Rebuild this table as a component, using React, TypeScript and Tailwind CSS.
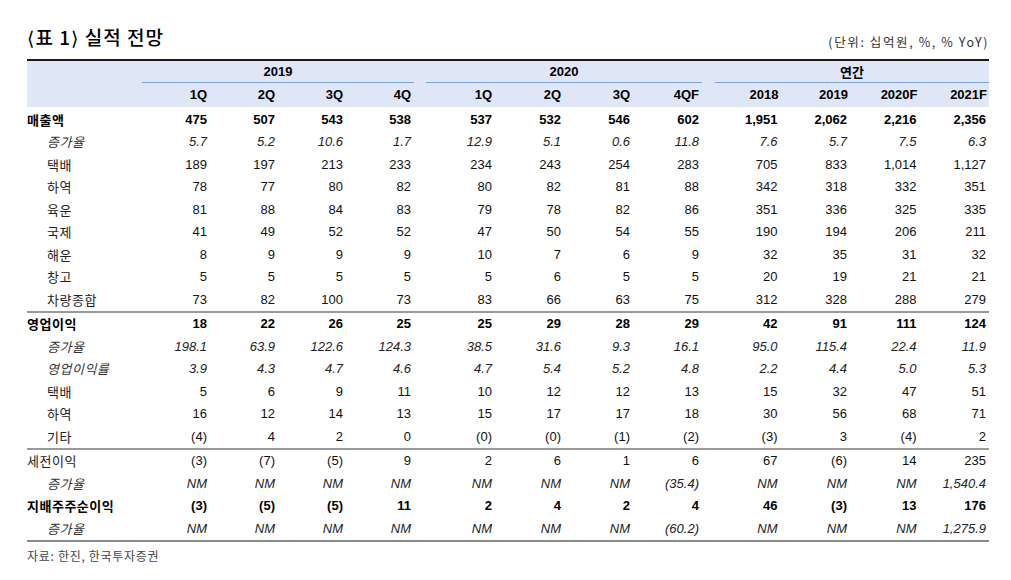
const GRID =
  'grid grid-cols-[115px_repeat(4,68px)_12px_repeat(4,69px)_9px_repeat(4,69.5px)]';

type RowKind = 'bold' | 'italic' | 'sub' | 'plain';
type Row = { label: string; kind: RowKind; vals: string[] };

const sales: Row[] = [
  { label: '매출액', kind: 'bold', vals: ['475', '507', '543', '538', '537', '532', '546', '602', '1,951', '2,062', '2,216', '2,356'] },
  { label: '증가율', kind: 'italic', vals: ['5.7', '5.2', '10.6', '1.7', '12.9', '5.1', '0.6', '11.8', '7.6', '5.7', '7.5', '6.3'] },
  { label: '택배', kind: 'sub', vals: ['189', '197', '213', '233', '234', '243', '254', '283', '705', '833', '1,014', '1,127'] },
  { label: '하역', kind: 'sub', vals: ['78', '77', '80', '82', '80', '82', '81', '88', '342', '318', '332', '351'] },
  { label: '육운', kind: 'sub', vals: ['81', '88', '84', '83', '79', '78', '82', '86', '351', '336', '325', '335'] },
  { label: '국제', kind: 'sub', vals: ['41', '49', '52', '52', '47', '50', '54', '55', '190', '194', '206', '211'] },
  { label: '해운', kind: 'sub', vals: ['8', '9', '9', '9', '10', '7', '6', '9', '32', '35', '31', '32'] },
  { label: '창고', kind: 'sub', vals: ['5', '5', '5', '5', '5', '6', '5', '5', '20', '19', '21', '21'] },
  { label: '차량종합', kind: 'sub', vals: ['73', '82', '100', '73', '83', '66', '63', '75', '312', '328', '288', '279'] },
];

const opProfit: Row[] = [
  { label: '영업이익', kind: 'bold', vals: ['18', '22', '26', '25', '25', '29', '28', '29', '42', '91', '111', '124'] },
  { label: '증가율', kind: 'italic', vals: ['198.1', '63.9', '122.6', '124.3', '38.5', '31.6', '9.3', '16.1', '95.0', '115.4', '22.4', '11.9'] },
  { label: '영업이익률', kind: 'italic', vals: ['3.9', '4.3', '4.7', '4.6', '4.7', '5.4', '5.2', '4.8', '2.2', '4.4', '5.0', '5.3'] },
  { label: '택배', kind: 'sub', vals: ['5', '6', '9', '11', '10', '12', '12', '13', '15', '32', '47', '51'] },
  { label: '하역', kind: 'sub', vals: ['16', '12', '14', '13', '15', '17', '17', '18', '30', '56', '68', '71'] },
  { label: '기타', kind: 'sub', vals: ['(4)', '4', '2', '0', '(0)', '(0)', '(1)', '(2)', '(3)', '3', '(4)', '2'] },
];

const netProfit: Row[] = [
  { label: '세전이익', kind: 'plain', vals: ['(3)', '(7)', '(5)', '9', '2', '6', '1', '6', '67', '(6)', '14', '235'] },
  { label: '증가율', kind: 'italic', vals: ['NM', 'NM', 'NM', 'NM', 'NM', 'NM', 'NM', '(35.4)', 'NM', 'NM', 'NM', '1,540.4'] },
  { label: '지배주주순이익', kind: 'bold', vals: ['(3)', '(5)', '(5)', '11', '2', '4', '2', '4', '46', '(3)', '13', '176'] },
  { label: '증가율', kind: 'italic', vals: ['NM', 'NM', 'NM', 'NM', 'NM', 'NM', 'NM', '(60.2)', 'NM', 'NM', 'NM', '1,275.9'] },
];

const kor = "font-['Noto_Sans_CJK_KR',sans-serif]";
const num = "font-['Liberation_Sans',Arial,sans-serif]";

function DataRow({ row }: { row: Row }) {
  const labelCls =
    row.kind === 'bold'
      ? 'font-bold text-black'
      : row.kind === 'italic'
        ? 'italic pl-5 text-[#333]'
        : row.kind === 'sub'
          ? 'pl-5 text-[#222]'
          : 'text-[#222]';
  const numCls =
    row.kind === 'bold' ? 'font-bold text-black' : row.kind === 'italic' ? 'italic text-[#222]' : 'text-[#111]';

  const cells: React.ReactNode[] = [];
  row.vals.forEach((v, i) => {
    if (i === 4 || i === 8) cells.push(<div key={`g${i}`} />);
    cells.push(
      <div key={i} className={`${num} ${numCls} pr-[3px] text-right text-[13px]`}>
        {v}
      </div>
    );
  });

  return (
    <div className={`${GRID} h-[22.5px] items-center leading-none`}>
      <div className={`${kor} ${labelCls} text-[13px] tracking-[0.5px] whitespace-nowrap`}>{row.label}</div>
      {cells}
    </div>
  );
}

export default function App() {
  const q1 = ['1Q', '2Q', '3Q', '4Q'];
  const q2 = ['1Q', '2Q', '3Q', '4QF'];
  const yrs = ['2018', '2019', '2020F', '2021F'];
  const bracket = "font-['DejaVu_Sans',sans-serif] font-normal";

  return (
    <div className="w-[1011px] h-[580px] bg-white pl-[27px] pt-[26px]">
      <div className="w-[962px]">
        <div className="flex items-end justify-between mb-[10px]">
          <h1 className={`${kor} text-[19px] leading-[22px] font-medium text-black tracking-[1px]`}>
            <span className={bracket}>⟨</span>표 1<span className={bracket}>⟩</span> 실적 전망
          </h1>
          <div className={`${kor} text-[12.5px] leading-[14px] text-[#333] tracking-[1.6px]`}>
            (단위: 십억원, %, % YoY)
          </div>
        </div>

        <div className="h-[2px] bg-[#1a1a1a]" />
        <div className="bg-[#dfe6f5]">
          <div className={`${GRID} h-[22px]`}>
            <div />
            <div className="col-span-4 border-b border-[#7ba4d8] flex items-center justify-center">
              <span className={`${num} font-bold text-[13px] text-black`}>2019</span>
            </div>
            <div />
            <div className="col-span-4 border-b border-[#7ba4d8] flex items-center justify-center">
              <span className={`${num} font-bold text-[13px] text-black`}>2020</span>
            </div>
            <div />
            <div className="col-span-4 ml-[4px] border-b border-[#7ba4d8] flex items-center justify-center">
              <span className={`${kor} font-bold text-[13px] text-black`}>연간</span>
            </div>
          </div>
          <div className={`${GRID} h-[24px] items-center`}>
            <div />
            {q1.map((h) => (
              <div key={`a${h}`} className={`${num} font-bold text-[13px] text-right pr-[3px] text-black`}>
                {h}
              </div>
            ))}
            <div />
            {q2.map((h) => (
              <div key={`b${h}`} className={`${num} font-bold text-[13px] text-right pr-[3px] text-black`}>
                {h}
              </div>
            ))}
            <div />
            {yrs.map((h) => (
              <div key={`c${h}`} className={`${num} font-bold text-[13px] text-right pr-[2px] text-black`}>
                {h}
              </div>
            ))}
          </div>
        </div>

        <div className="pt-[1px]">
          {sales.map((r, i) => (
            <DataRow key={`s${i}`} row={r} />
          ))}
        </div>
        <div className="h-[2px] bg-[#9a9a9a]" />
        {opProfit.map((r, i) => (
          <DataRow key={`o${i}`} row={r} />
        ))}
        <div className="h-[2px] bg-[#9a9a9a]" />
        {netProfit.map((r, i) => (
          <DataRow key={`n${i}`} row={r} />
        ))}
        <div className="h-[2px] bg-[#8a8a8a]" />

        <div className={`${kor} mt-[7px] text-[12px] leading-[14px] text-[#444] tracking-[0.7px]`}>
          자료: 한진, 한국투자증권
        </div>
      </div>
    </div>
  );
}
